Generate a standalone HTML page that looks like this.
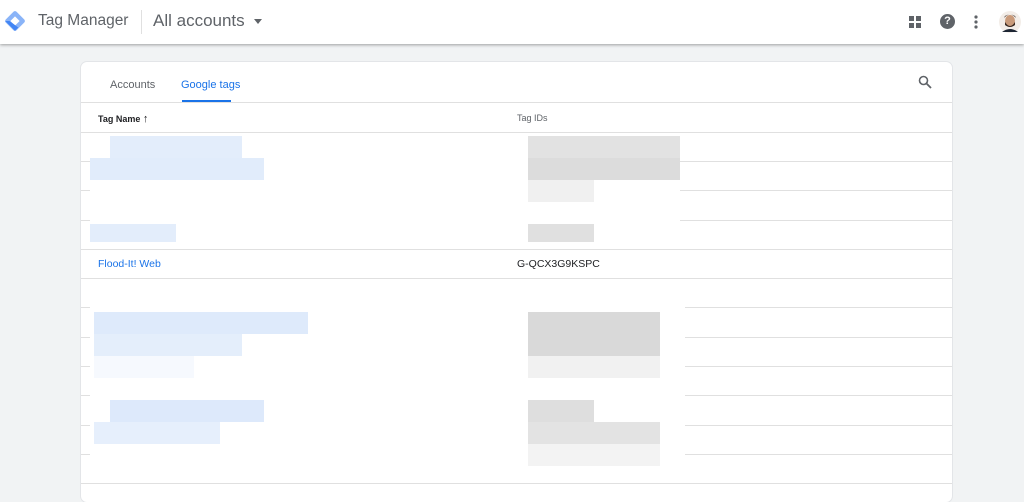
<!DOCTYPE html>
<html><head><style>
*{margin:0;padding:0;box-sizing:border-box}
body{width:1024px;height:488px;overflow:hidden;background:#f1f3f4;font-family:"Liberation Sans",Arial,sans-serif;position:relative}
.hdr{position:absolute;left:0;top:0;width:1024px;height:44px;background:#fff;box-shadow:0 1px 3px rgba(0,0,0,.35);z-index:2}
.card{position:absolute;left:81px;top:62px;width:871px;height:440px;background:#fff;border-radius:6px;box-shadow:0 0 0 1px #e3e5e8}
.a{position:absolute}
.line{position:absolute;left:0;width:871px;height:1px;background:#e0e0e0}
.b{position:absolute;background:#dbe8fb}
.g{position:absolute;background:#dcdcdc}
</style></head><body>
<div class="hdr">
<svg class="a" style="left:3px;top:9px" width="24" height="24" viewBox="0 0 22 22"><rect x="4" y="4" width="14" height="14" rx="2" transform="rotate(45 11 11)" fill="#8ab4f8"/><rect x="8" y="8" width="6" height="6" transform="rotate(45 11 11)" fill="#fff"/><path d="M2 11 L11 20 L14 17 L6 11Z" fill="#4285f4"/></svg>
<div class="a" style="left:38px;top:12px;font-size:15.5px;color:#5f6368">Tag Manager</div>
<div class="a" style="left:141px;top:10px;width:1px;height:24px;background:#e0e0e0"></div>
<div class="a" style="left:153px;top:11px;font-size:17px;color:#5f6368">All accounts</div>
<div class="a" style="left:254px;top:19px;border:4px solid transparent;border-top:5px solid #5f6368"></div>
<svg class="a" style="left:908px;top:15px" width="14" height="14"><rect x="1" y="1" width="5" height="5" fill="#5f6368"/><rect x="8" y="1" width="5" height="5" fill="#5f6368"/><rect x="1" y="8" width="5" height="5" fill="#5f6368"/><rect x="8" y="8" width="5" height="5" fill="#5f6368"/></svg>
<div class="a" style="left:940px;top:14px;width:15px;height:15px;border-radius:50%;background:#5f6368;color:#fff;font-size:11px;font-weight:bold;text-align:center;line-height:15px">?</div>
<svg class="a" style="left:973px;top:14px" width="6" height="16"><circle cx="3" cy="3" r="1.6" fill="#5f6368"/><circle cx="3" cy="8" r="1.6" fill="#5f6368"/><circle cx="3" cy="13" r="1.6" fill="#5f6368"/></svg>
<svg class="a" style="left:999px;top:10px" width="22" height="24"><circle cx="11" cy="12" r="11" fill="#f3ede8"/><ellipse cx="11" cy="11" rx="5" ry="6" fill="#c99a7a"/><path d="M5 8 Q11 1 17 8 L16 6 Q11 3 6 6Z" fill="#2b1d16"/><path d="M6 12 Q11 20 16 12 L16 15 Q11 19 6 15Z" fill="#3a2a22"/><path d="M3 22 Q11 16 19 22Z" fill="#1c2533"/></svg>
</div>
<div class="card">
<div class="a" style="left:29px;top:17px;font-size:11px;color:#5f6368">Accounts</div>
<div class="a" style="left:100px;top:17px;font-size:11px;color:#1a73e8">Google tags</div>
<div class="a" style="left:101px;top:38px;width:49px;height:2px;background:#1a73e8"></div>
<svg class="a" style="left:837px;top:13px" width="14" height="14"><circle cx="5.5" cy="5.5" r="4" stroke="#5f6368" stroke-width="1.6" fill="none"/><path d="M8.5 8.5L13 13" stroke="#5f6368" stroke-width="1.8"/></svg>
<div class="line" style="top:40px"></div>
<div class="a" style="left:17px;top:51px;font-size:9px;color:#202124;font-weight:bold">Tag Name <span style="font-weight:normal;font-size:11px">↑</span></div>
<div class="a" style="left:436px;top:51px;font-size:9px;color:#5f6368">Tag IDs</div>
<div class="line" style="top:70px"></div>
<div class="line" style="top:99px"></div>
<div class="line" style="top:128px"></div>
<div class="line" style="top:158px"></div>
<div class="line" style="top:187px"></div>
<div class="line" style="top:216px"></div>
<div class="line" style="top:245px"></div>
<div class="line" style="top:275px"></div>
<div class="line" style="top:304px"></div>
<div class="line" style="top:333px"></div>
<div class="line" style="top:363px"></div>
<div class="line" style="top:392px"></div>
<div class="line" style="top:421px"></div>
<div class="a" style="left:9px;top:73px;width:590px;height:110px;background:#fff"></div>
<div class="a" style="left:9px;top:220px;width:595px;height:190px;background:#fff"></div>
<div class="a" style="left:17px;top:196px;font-size:10.5px;color:#1a73e8">Flood-It! Web</div>
<div class="a" style="left:436px;top:196px;font-size:10.5px;color:#202124">G-QCX3G9KSPC</div>
<div class="b" style="left:29px;top:74px;width:132px;height:22px;background:#e3edfb"></div>
<div class="b" style="left:9px;top:96px;width:174px;height:22px;background:#e1ecfb"></div>
<div class="b" style="left:9px;top:162px;width:86px;height:18px;background:#e3edfb"></div>
<div class="g" style="left:447px;top:74px;width:152px;height:22px;background:#e2e2e2"></div>
<div class="g" style="left:447px;top:96px;width:152px;height:22px;background:#dcdcdc"></div>
<div class="g" style="left:447px;top:118px;width:66px;height:22px;background:#f0f0f0"></div>
<div class="g" style="left:447px;top:162px;width:66px;height:18px;background:#e0e0e0"></div>
<div class="b" style="left:13px;top:250px;width:214px;height:22px;background:#deeafb"></div>
<div class="b" style="left:13px;top:272px;width:148px;height:22px;background:#e4eefb"></div>
<div class="b" style="left:13px;top:294px;width:100px;height:22px;background:#f6f9fe"></div>
<div class="g" style="left:447px;top:250px;width:132px;height:44px;background:#d9d9d9"></div>
<div class="g" style="left:447px;top:294px;width:132px;height:22px;background:#f1f1f1"></div>
<div class="b" style="left:29px;top:338px;width:154px;height:22px;background:#dde9fb"></div>
<div class="b" style="left:13px;top:360px;width:126px;height:22px;background:#e6effc"></div>
<div class="g" style="left:447px;top:338px;width:66px;height:22px;background:#dedede"></div>
<div class="g" style="left:447px;top:360px;width:132px;height:22px;background:#e3e3e3"></div>
<div class="g" style="left:447px;top:382px;width:132px;height:22px;background:#f3f3f3"></div>
</div>
</body></html>
